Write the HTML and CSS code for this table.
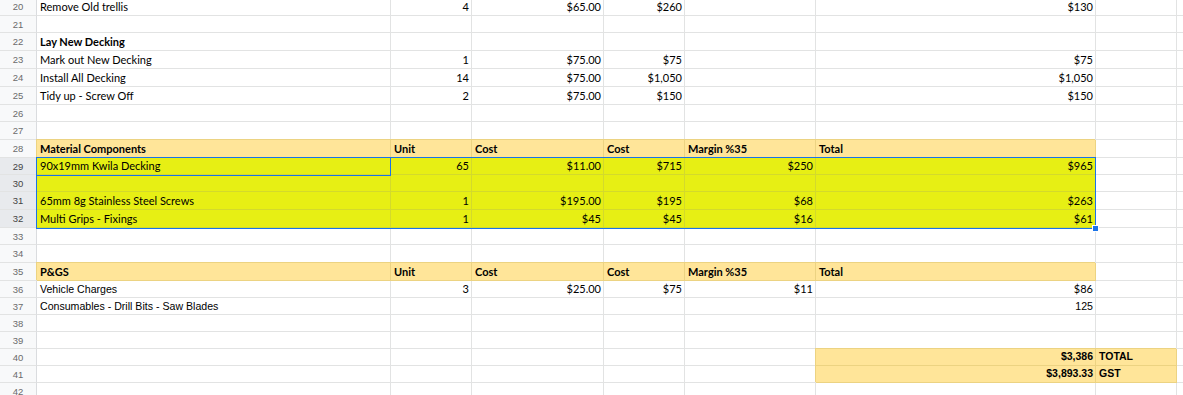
FILE: index.html
```html
<!DOCTYPE html>
<html>
<head>
<meta charset="utf-8">
<link rel="stylesheet" href="styles.css">
</head>
<body>
<div class="sheet">
  <div class="row h18"><div class="rh">20</div><div class="c">Remove Old trellis</div><div class="c r">4</div><div class="c r">$65.00</div><div class="c r">$260</div><div class="c"></div><div class="c r">$130</div><div class="c"></div><div class="c"></div></div>
  <div class="row h17"><div class="rh">21</div><div class="c"></div><div class="c"></div><div class="c"></div><div class="c"></div><div class="c"></div><div class="c"></div><div class="c"></div><div class="c"></div></div>
  <div class="row h18"><div class="rh">22</div><div class="c b">Lay New Decking</div><div class="c"></div><div class="c"></div><div class="c"></div><div class="c"></div><div class="c"></div><div class="c"></div><div class="c"></div></div>
  <div class="row h18"><div class="rh">23</div><div class="c">Mark out New Decking</div><div class="c r">1</div><div class="c r">$75.00</div><div class="c r">$75</div><div class="c"></div><div class="c r">$75</div><div class="c"></div><div class="c"></div></div>
  <div class="row h18"><div class="rh">24</div><div class="c">Install All Decking</div><div class="c r">14</div><div class="c r">$75.00</div><div class="c r">$1,050</div><div class="c"></div><div class="c r">$1,050</div><div class="c"></div><div class="c"></div></div>
  <div class="row h18"><div class="rh">25</div><div class="c">Tidy up - Screw Off</div><div class="c r">2</div><div class="c r">$75.00</div><div class="c r">$150</div><div class="c"></div><div class="c r">$150</div><div class="c"></div><div class="c"></div></div>
  <div class="row h17"><div class="rh">26</div><div class="c"></div><div class="c"></div><div class="c"></div><div class="c"></div><div class="c"></div><div class="c"></div><div class="c"></div><div class="c"></div></div>
  <div class="row h18"><div class="rh">27</div><div class="c"></div><div class="c"></div><div class="c"></div><div class="c"></div><div class="c"></div><div class="c"></div><div class="c"></div><div class="c"></div></div>
  <div class="row h18"><div class="rh">28</div><div class="c b o">Material Components</div><div class="c b o">Unit</div><div class="c b o">Cost</div><div class="c b o">Cost</div><div class="c b o">Margin %35</div><div class="c b o">Total</div><div class="c"></div><div class="c"></div></div>
  <div class="row h17"><div class="rh sel">29</div><div class="c y">90x19mm Kwila Decking</div><div class="c r y">65</div><div class="c r y">$11.00</div><div class="c r y">$715</div><div class="c r y">$250</div><div class="c r y">$965</div><div class="c"></div><div class="c"></div></div>
  <div class="row h17"><div class="rh sel">30</div><div class="c y"></div><div class="c y"></div><div class="c y"></div><div class="c y"></div><div class="c y"></div><div class="c y"></div><div class="c"></div><div class="c"></div></div>
  <div class="row h18"><div class="rh sel">31</div><div class="c y">65mm 8g Stainless Steel Screws</div><div class="c r y">1</div><div class="c r y">$195.00</div><div class="c r y">$195</div><div class="c r y">$68</div><div class="c r y">$263</div><div class="c"></div><div class="c"></div></div>
  <div class="row h18"><div class="rh sel">32</div><div class="c y">Multi Grips - Fixings</div><div class="c r y">1</div><div class="c r y">$45</div><div class="c r y">$45</div><div class="c r y">$16</div><div class="c r y">$61</div><div class="c"></div><div class="c"></div></div>
  <div class="row h17"><div class="rh">33</div><div class="c"></div><div class="c"></div><div class="c"></div><div class="c"></div><div class="c"></div><div class="c"></div><div class="c"></div><div class="c"></div></div>
  <div class="row h18"><div class="rh">34</div><div class="c"></div><div class="c"></div><div class="c"></div><div class="c"></div><div class="c"></div><div class="c"></div><div class="c"></div><div class="c"></div></div>
  <div class="row h18"><div class="rh">35</div><div class="c b o">P&amp;GS</div><div class="c b o">Unit</div><div class="c b o">Cost</div><div class="c b o">Cost</div><div class="c b o">Margin %35</div><div class="c b o">Total</div><div class="c"></div><div class="c"></div></div>
  <div class="row h17"><div class="rh">36</div><div class="c ar">Vehicle Charges</div><div class="c r">3</div><div class="c r">$25.00</div><div class="c r">$75</div><div class="c r">$11</div><div class="c r">$86</div><div class="c"></div><div class="c"></div></div>
  <div class="row h17"><div class="rh">37</div><div class="c ar">Consumables - Drill Bits - Saw Blades</div><div class="c"></div><div class="c"></div><div class="c"></div><div class="c"></div><div class="c r ar">125</div><div class="c"></div><div class="c"></div></div>
  <div class="row h17"><div class="rh">38</div><div class="c"></div><div class="c"></div><div class="c"></div><div class="c"></div><div class="c"></div><div class="c"></div><div class="c"></div><div class="c"></div></div>
  <div class="row h17"><div class="rh">39</div><div class="c"></div><div class="c"></div><div class="c"></div><div class="c"></div><div class="c"></div><div class="c"></div><div class="c"></div><div class="c"></div></div>
  <div class="row h17"><div class="rh">40</div><div class="c"></div><div class="c"></div><div class="c"></div><div class="c"></div><div class="c"></div><div class="c r o tot">$3,386</div><div class="c o tot">TOTAL</div><div class="c"></div></div>
  <div class="row h17"><div class="rh">41</div><div class="c"></div><div class="c"></div><div class="c"></div><div class="c"></div><div class="c"></div><div class="c r o tot">$3,893.33</div><div class="c o tot">GST</div><div class="c"></div></div>
  <div class="row h17"><div class="rh">42</div><div class="c"></div><div class="c"></div><div class="c"></div><div class="c"></div><div class="c"></div><div class="c"></div><div class="c"></div><div class="c"></div></div>

  <div class="range"></div>
  <div class="active"></div>
  <div class="handle"></div>
</div>
</body>
</html>
```

FILE: styles.css
```css
html, body {
  margin: 0;
  padding: 0;
  background: #ffffff;
  overflow: hidden;
}

.sheet {
  position: relative;
  margin-top: -2px;
  font-family: Lato, "Liberation Sans", sans-serif;
  font-size: 11px;
  color: #000000;
}

.row {
  display: grid;
  grid-template-columns: 37px 354px 81px 132px 81px 131px 280px 81px 1fr;
}

.h17 { height: 17px; }
.h18 { height: 18px; }

.rh,
.c {
  box-sizing: border-box;
  border-right: 1px solid #e2e3e3;
  border-bottom: 1px solid #e2e3e3;
  white-space: nowrap;
  overflow: visible;
}

.rh {
  background: #f8f9fa;
  border-right-color: #dadcdf;
  color: #6b6b6b;
  font-family: "Liberation Sans", Arial, sans-serif;
  font-size: 9.5px;
  display: flex;
  align-items: center;
  justify-content: center;
}

.rh.sel {
  background: #e8eaed;
  color: #444444;
}

.c {
  display: flex;
  align-items: flex-end;
  padding: 0 3px 2px 3px;
  line-height: 13px;
}

.c.r {
  justify-content: flex-end;
  padding-right: 2px;
}

.c.b {
  font-weight: 700;
}

.c.ar {
  font-family: "Liberation Sans", Arial, sans-serif;
  font-size: 10.6px;
  padding-bottom: 1px;
}

.c.o {
  background: #ffe599;
  border-right-color: #ecd382;
  border-bottom-color: #ecd382;
  box-shadow: -1px -1px 0 #ecd382;
}

.c.y {
  background: #e7ef14;
  border-right-color: #d3da2c;
  border-bottom-color: #d3da2c;
}

.c.tot {
  font-family: "Liberation Sans", Arial, sans-serif;
  font-weight: 700;
  font-size: 10.5px;
}

.range {
  position: absolute;
  left: 36px;
  top: 159px;
  width: 1060px;
  height: 72px;
  box-sizing: border-box;
  border: 1px solid #1a73e8;
}

.active {
  position: absolute;
  left: 36px;
  top: 159px;
  width: 355px;
  height: 19px;
  box-sizing: border-box;
  border: 1px solid #1a73e8;
}

.handle {
  position: absolute;
  left: 1092px;
  top: 227px;
  width: 5px;
  height: 5px;
  background: #1a73e8;
  border: 1px solid #ffffff;
}
```
